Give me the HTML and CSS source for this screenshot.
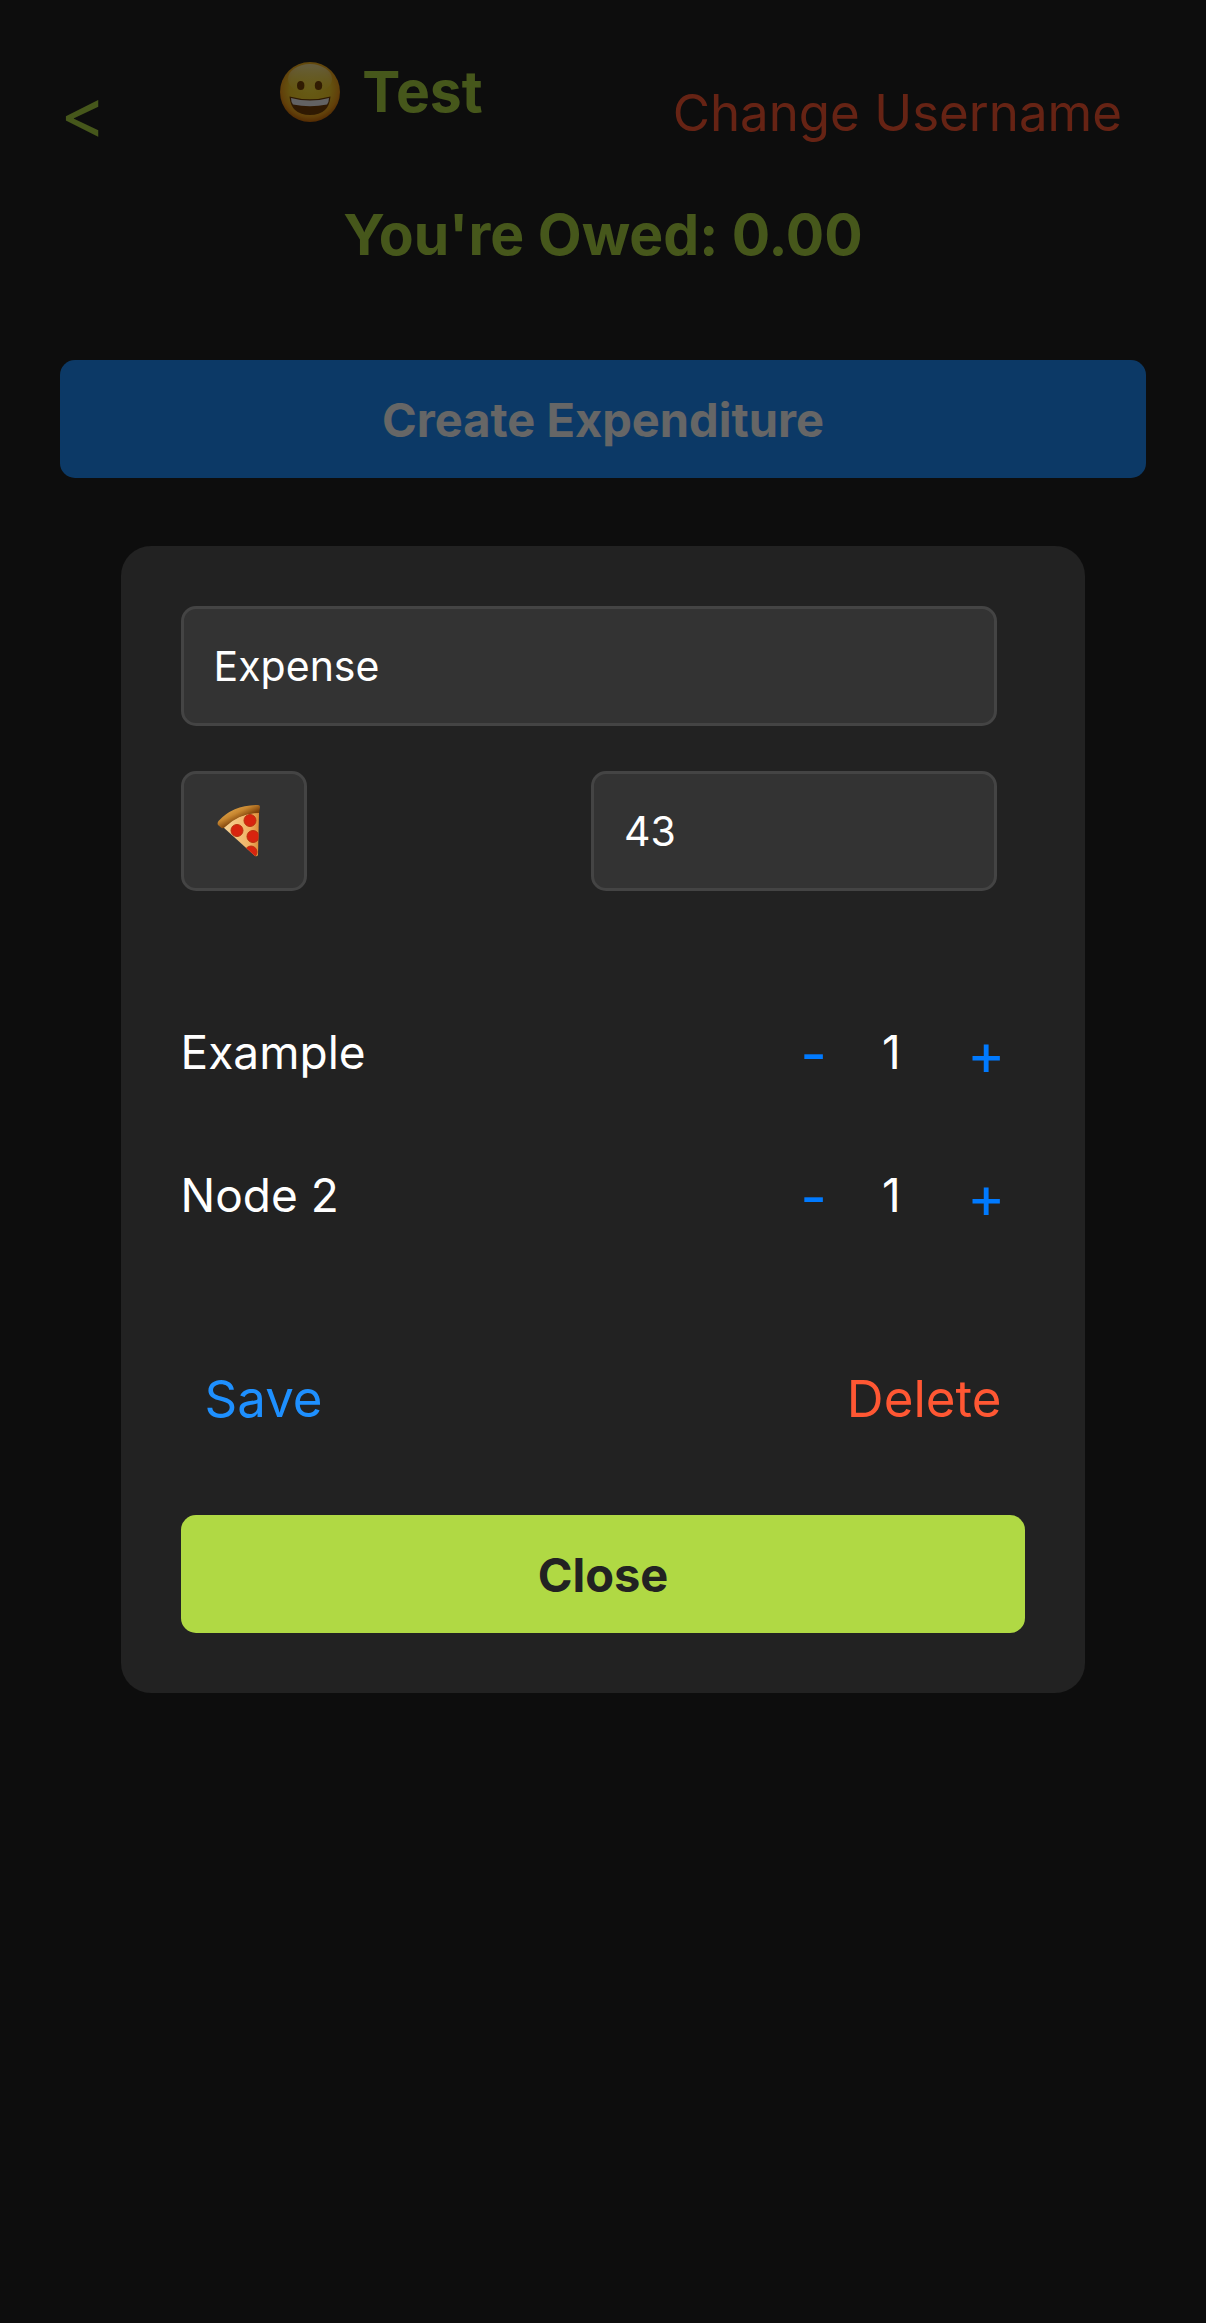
FILE: index.html
```html
<!DOCTYPE html>
<html lang="en">
<head>
<meta charset="utf-8">
<meta name="viewport" content="width=device-width, initial-scale=1">
<title>Test</title>
<link rel="stylesheet" href="styles.css">
</head>
<body>
<main class="page">
  <header class="header">
    <button class="back" type="button" aria-label="Back">&lt;</button>
    <h1 class="title">
      <svg class="face" viewBox="0 0 60 60" aria-hidden="true">
        <defs>
          <radialGradient id="skin" cx="30" cy="26" r="34" gradientUnits="userSpaceOnUse">
            <stop offset="0" stop-color="#ffe336"/>
            <stop offset=".6" stop-color="#fbd028"/>
            <stop offset=".85" stop-color="#f3a01a"/>
            <stop offset="1" stop-color="#d06c08"/>
          </radialGradient>
          <linearGradient id="shine" x1="0" y1="0" x2="0" y2="1">
            <stop offset="0" stop-color="#fff6c8" stop-opacity=".75"/>
            <stop offset="1" stop-color="#ffe95a" stop-opacity="0"/>
          </linearGradient>
        </defs>
        <circle cx="30" cy="30" r="30" fill="url(#skin)"/>
        <ellipse cx="30" cy="17" rx="22" ry="15" fill="url(#shine)"/>
        <ellipse cx="20.700" cy="23.500" rx="3.700" ry="4.500" fill="#7c4606"/>
        <ellipse cx="38.500" cy="23.500" rx="3.700" ry="4.500" fill="#7c4606"/>
        <path d="M9.500 34.500Q30 40 50.500 34.500Q49 53 30 53Q11 53 9.500 34.500Z" fill="#754006"/>
        <path d="M11 36Q30 41 49 36Q49 40 47 42.500Q30 46 13 42.500Q11 40 11 36Z" fill="#f4f4f8"/>
      </svg>
      <span>Test</span>
    </h1>
    <button class="text-button danger" type="button">Change Username</button>
  </header>
  <p class="total">You're Owed: 0.00</p>
  <button class="block-button create" type="button">Create Expenditure</button>
</main>

<div class="overlay">
  <form class="modal" role="dialog" aria-modal="true" aria-label="Edit expenditure">
    <div class="fields">
      <input class="field" type="text" value="Expense" aria-label="Name">
      <div class="field-row">
        <button class="field field-icon" type="button" aria-label="Icon: pizza">
          <svg class="pizza" viewBox="0 0 43 52" aria-hidden="true">
            <defs>
              <linearGradient id="crust" x1="12" y1="3" x2="19" y2="17" gradientUnits="userSpaceOnUse">
                <stop offset="0" stop-color="#e0a64c"/>
                <stop offset=".5" stop-color="#c88730"/>
                <stop offset="1" stop-color="#80430a"/>
              </linearGradient>
              <linearGradient id="cheese" x1="10" y1="30" x2="43" y2="30" gradientUnits="userSpaceOnUse">
                <stop offset="0" stop-color="#f6cf90"/>
                <stop offset=".7" stop-color="#efb264"/>
                <stop offset="1" stop-color="#d98531"/>
              </linearGradient>
              <clipPath id="slice"><path d="M6 22Q20 9 42 7L41 50Q40 52 38 51Z"/></clipPath>
            </defs>
            <path d="M6 22Q20 9 42 7L41 50Q40 52 38 51Z" fill="url(#cheese)"/>
            <g clip-path="url(#slice)" fill="#d8240f" stroke="#b9320f" stroke-width="1">
              <circle cx="33" cy="15.500" r="6"/>
              <circle cx="20" cy="25.500" r="6"/>
              <circle cx="36" cy="31.500" r="6"/>
              <circle cx="34" cy="47" r="6"/>
            </g>
            <path d="M1 20Q0 18 1.500 16Q16 0 41 0Q43 0 43 2L42 8Q23 8 8 22Q6 24 4.500 23Z" fill="url(#crust)"/>
          </svg>
        </button>
        <input class="field amount" type="text" inputmode="decimal" value="43" aria-label="Amount">
      </div>
    </div>

    <ul class="people">
      <li class="person">
        <span>Example</span>
        <div class="stepper">
          <button class="step" type="button" aria-label="Decrease Example">-</button>
          <output class="count">1</output>
          <button class="step" type="button" aria-label="Increase Example">+</button>
        </div>
      </li>
      <li class="person">
        <span>Node 2</span>
        <div class="stepper">
          <button class="step" type="button" aria-label="Decrease Node 2">-</button>
          <output class="count">1</output>
          <button class="step" type="button" aria-label="Increase Node 2">+</button>
        </div>
      </li>
    </ul>

    <div class="actions">
      <button class="text-button primary" type="button">Save</button>
      <button class="text-button danger" type="button">Delete</button>
    </div>
    <button class="block-button close" type="button">Close</button>
  </form>
</div>
</body>
</html>
```
FILE: styles.css
```css
* {
  box-sizing: border-box;
}

body {
  margin: 0;
  background: #222;
  color: #fff;
  font-family: Inter, "Liberation Sans", sans-serif;
}

button,
input {
  margin: 0;
  border: 0;
  font: inherit;
  color: inherit;
}

button {
  padding: 0;
  background: none;
  cursor: pointer;
}

.page {
  min-height: 100vh;
  padding: 56px 60px;
}

.header {
  display: flex;
  align-items: center;
  justify-content: space-between;
}

.back {
  padding-right: 8px;
  font-size: 70px;
  line-height: 72px;
  color: #b0d944;
}

.title {
  display: flex;
  align-items: center;
  gap: 22px;
  margin: 0 0 42px;
  font-size: 57px;
  line-height: 72px;
  font-weight: 700;
  color: #b0d944;
}

.face {
  width: 60px;
  height: 60px;
}

.text-button {
  padding: 0 24px;
  font-size: 51px;
  line-height: 64px;
}

.primary {
  color: #1e90ff;
}

.danger {
  color: #ff5733;
}

.total {
  margin: 29px 0 89px;
  font-size: 57px;
  line-height: 72px;
  font-weight: 700;
  text-align: center;
  color: #b0d944;
}

.block-button {
  display: block;
  width: 100%;
  height: 118px;
  border-radius: 15px;
  font-size: 47px;
  font-weight: 700;
}

.create {
  background: #1e90ff;
}

.close {
  background: #b0d944;
  color: #222;
}

.overlay {
  position: fixed;
  inset: 0;
  display: flex;
  align-items: center;
  justify-content: center;
  padding-bottom: 84px;
  background: rgba(0, 0, 0, 0.6);
}

.modal {
  width: 80%;
  padding: 60px;
  border-radius: 30px;
  background: #222;
}

.fields {
  display: grid;
  gap: 45px;
  padding-right: 28px;
}

.field {
  width: 100%;
  height: 120px;
  padding: 0 30px;
  border: 3px solid #444;
  border-radius: 15px;
  background: #333;
  font-size: 41px;
}

.field-row {
  display: flex;
  justify-content: space-between;
}

.field-icon {
  width: 126px;
  padding: 0 33px;
}

.pizza {
  display: block;
  width: 43px;
  height: 52px;
}

.amount {
  width: calc(50% - 2px);
}

.people {
  display: grid;
  gap: 83px;
  margin: 131px 0 142px;
  padding: 0;
  list-style: none;
  font-size: 46px;
  line-height: 60px;
}

.person,
.stepper,
.actions {
  display: flex;
  align-items: center;
  justify-content: space-between;
}

.stepper {
  height: 60px;
}

.step {
  padding: 4px 20px 0;
  font-size: 58px;
  line-height: 60px;
  color: #007aff;
}

.count {
  width: 100px;
  padding-left: 35px;
}

.actions {
  margin-bottom: 84px;
}
```
